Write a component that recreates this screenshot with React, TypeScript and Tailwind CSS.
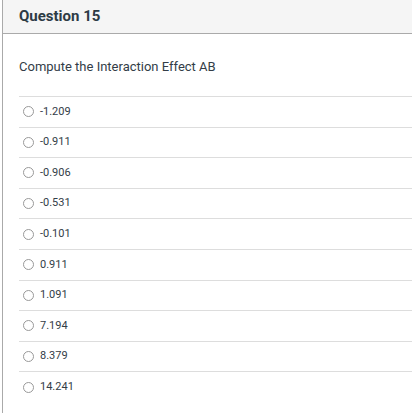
const answers = ["-1.209", "-0.911", "-0.906", "-0.531", "-0.101", "0.911", "1.091", "7.194", "8.379", "14.241"];

export default function App() {
  return (
    <div className="h-[413px] w-[412px] bg-white font-['Roboto',sans-serif] overflow-hidden">
      <div className="ml-[2px] h-full border-l border-[#aaaaaa]">
        <div className="flex h-[34px] items-center border-b border-[#aaaaaa] bg-[#f5f5f5] pl-[16px]">
          <h2 className="text-[15px] font-bold text-[#2d3b45]">Question 15</h2>
        </div>
        <div className="pl-[16px]">
          <p className="pt-[24px] text-[13px] leading-[18px] text-[#333d47]">
            Compute the Interaction Effect AB
          </p>
          <div className="mt-[20px]">
            {answers.map((a) => (
              <label
                key={a}
                className="flex h-[30.6px] items-center gap-[6px] border-t border-[#dddddd] pl-[4px]"
              >
                <span className="block h-[11px] w-[11px] rounded-full border border-[#999999] bg-white" />
                <span className="text-[11px] text-[#333d47]">{a}</span>
              </label>
            ))}
          </div>
        </div>
      </div>
    </div>
  );
}
